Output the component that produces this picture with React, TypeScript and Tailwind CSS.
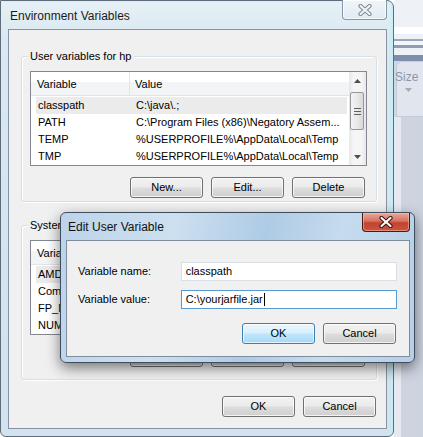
import React from "react";

const ui = "font-['Liberation_Sans',Arial,sans-serif] text-[11px] text-black";

const btnBase =
  "h-[21px] w-[73px] rounded-[3px] border flex items-center justify-center text-[11px] leading-none";
const btnNormal =
  "border-[#707070] bg-[linear-gradient(#f2f2f2_0%,#ebebeb_48%,#dddddd_52%,#cfcfcf_100%)] shadow-[inset_0_0_0_1px_rgba(255,255,255,0.75)]";
const btnFocus =
  "border-[#3c7fb1] bg-[linear-gradient(#eaf6fd_0%,#d9f0fc_48%,#bee6fd_52%,#a7d9f5_100%)] shadow-[inset_0_0_0_1px_rgba(255,255,255,0.7)]";

function Button({ label, focused }: { label: string; focused?: boolean }) {
  return <div className={`${btnBase} ${focused ? btnFocus : btnNormal}`}>{label}</div>;
}

function Arrow({ up }: { up?: boolean }) {
  return (
    <svg width="7" height="4" viewBox="0 0 7 4">
      <path d={up ? "M0 4 L3.5 0 L7 4 Z" : "M0 0 L3.5 4 L7 0 Z"} fill="#4d4d4d" />
    </svg>
  );
}

function Scrollbar() {
  return (
    <div className="w-[17px] flex flex-col bg-[linear-gradient(90deg,#e6e6e6,#f5f5f5_25%,#f5f5f5_75%,#e6e6e6)]">
      <div className="h-[17px] flex items-center justify-center">
        <Arrow up />
      </div>
      <div className="mt-[3px] ml-[1px] h-[38px] w-[14px] rounded-[2px] border border-[#979797] bg-[linear-gradient(90deg,#f4f4f4,#e9e9e9_50%,#d9d9d9)] flex flex-col items-center justify-center gap-[2px]">
        <div className="h-[1px] w-[7px] bg-[#5f5f5f]" />
        <div className="h-[1px] w-[7px] bg-[#5f5f5f]" />
        <div className="h-[1px] w-[7px] bg-[#5f5f5f]" />
      </div>
      <div className="flex-1" />
      <div className="h-[17px] flex items-center justify-center">
        <Arrow />
      </div>
    </div>
  );
}

type Row = [string, string];

function ListView({ rows, selected }: { rows: Row[]; selected: number }) {
  return (
    <div className="h-[95px] w-[337px] border border-[#828790] bg-white flex">
      <div className="flex-1 flex flex-col overflow-hidden">
        <div className="h-[24px] flex border-b border-[#e3e4e6] bg-[linear-gradient(#ffffff_0%,#ffffff_44%,#f3f4f6_44%,#f3f4f6_100%)]">
          <div className="w-[99px] pl-[6px] pt-[2px] flex items-center border-r border-[#e3e5e7]">Variable</div>
          <div className="pl-[5px] pt-[2px] flex items-center">Value</div>
        </div>
        <div className="pt-[1px] pl-[5px] flex flex-col">
          {rows.map(([name, value], i) => (
            <div
              key={name}
              className={`h-[17px] w-[311px] flex items-center whitespace-nowrap ${
                i === selected ? "bg-[#ebebeb]" : ""
              }`}
            >
              <div className="w-[100px] pl-[2px] overflow-hidden">{name}</div>
              <div className="flex-1 overflow-hidden">{value}</div>
            </div>
          ))}
        </div>
      </div>
      <Scrollbar />
    </div>
  );
}

function Group({ label, className, children }: { label: string; className: string; children: React.ReactNode }) {
  return (
    <div
      className={`relative rounded-[3px] border border-[#d5dfe5] shadow-[inset_1px_1px_0_#ffffff,1px_1px_0_#ffffff] ${className}`}
    >
      <span className="absolute left-[6px] -top-[8px] bg-[#f0f0f0] px-[2px] leading-[14px]">{label}</span>
      {children}
    </div>
  );
}

function CloseGlyph({ light }: { light?: boolean }) {
  return (
    <svg width="14" height="12" viewBox="0 0 14 12">
      <path
        d="M2.5 2 L11.5 10 M11.5 2 L2.5 10"
        stroke={light ? "#7d8794" : "#3b1010"}
        strokeWidth="4.2"
        strokeLinecap="round"
      />
      <path
        d="M2.5 2 L11.5 10 M11.5 2 L2.5 10"
        stroke={light ? "#f3f6f9" : "#ffffff"}
        strokeWidth="2.2"
        strokeLinecap="round"
      />
    </svg>
  );
}

const userRows: Row[] = [
  ["classpath", "C:\\java\\.;"],
  ["PATH", "C:\\Program Files (x86)\\Negatory Assem..."],
  ["TEMP", "%USERPROFILE%\\AppData\\Local\\Temp"],
  ["TMP", "%USERPROFILE%\\AppData\\Local\\Temp"],
];

const systemRows: Row[] = [
  ["AMDAPPSDKROOT", "C:\\Program Files (x86)\\AMD APP\\"],
  ["ComSpec", "C:\\Windows\\system32\\cmd.exe"],
  ["FP_NO_HOST_CHECK", "NO"],
  ["NUMBER_OF_PROCESSORS", "4"],
];

function MainWindow() {
  return (
    <div className="w-[394px] h-[437px] shrink-0 flex flex-col rounded-tr-[7px] rounded-b-[6px] border border-[#5f6c7b] pl-[7px] pr-[6px] pb-[7px] bg-[linear-gradient(180deg,#e6f0f6_0%,#d9e8f1_40px,#d2e3ee_100%)] shadow-[inset_-2px_0_2px_rgba(190,240,250,0.9)]">
      <div className="h-[28px] flex items-start justify-between">
        <div className="pl-[2px] pt-[7px] text-[12px] leading-[16px] text-[#1b1b1b]">Environment Variables</div>
        <div className="-mt-[1px] h-[20px] w-[45px] rounded-b-[4px] border border-t-0 border-[#8595a8] bg-[linear-gradient(#f1f5f9,#e2eaf2)] flex items-center justify-center shadow-[inset_0_0_0_1px_rgba(255,255,255,0.7)]">
          <CloseGlyph light />
        </div>
      </div>
      <div className="flex-1 border border-[#8793a2] bg-[#f0f0f0] flex flex-col pl-[12px] pt-[26px] pr-[9px]">
        <Group label="User variables for hp" className="h-[146px] w-[356px] pl-[8px] pt-[14px] pr-[11px]">
          <ListView rows={userRows} selected={0} />
          <div className="mt-[11px] flex justify-end gap-[8px]">
            <Button label="New..." />
            <Button label="Edit..." />
            <Button label="Delete" />
          </div>
        </Group>
        <Group label="System variables" className="mt-[23px] h-[155px] w-[356px] pl-[8px] pt-[14px] pr-[11px]">
          <ListView rows={systemRows} selected={0} />
          <div className="mt-[11px] flex justify-end gap-[8px]">
            <Button label="New..." />
            <Button label="Edit..." />
            <Button label="Delete" />
          </div>
        </Group>
        <div className="mt-[16px] flex justify-end gap-[8px] pr-[1px]">
          <Button label="OK" />
          <Button label="Cancel" />
        </div>
      </div>
    </div>
  );
}

function BackgroundStrip() {
  return (
    <div className="flex-1 flex flex-col bg-[#d1d8e4]">
      <div className="h-[27px] bg-[#eef2f7]" />
      <div className="h-[7px] bg-white" />
      <div className="h-[5px] bg-[#eef2f7]" />
      <div className="h-[2px] bg-[#9ba7bf]" />
      <div className="h-[4px] bg-[#f4f6f9]" />
      <div className="h-[3px] bg-[#8f9cb6]" />
      <div className="h-[7px] bg-[#eef1f6]" />
      <div className="h-[6px] bg-[#7f8eac]" />
      <div className="ml-[2px] h-[56px] rounded-tl-[6px] border-l border-t border-b border-[#c3ccd9] bg-[#e1e6ee] flex flex-col pt-[7px]">
        <span className="-ml-[2px] text-[12px] leading-[16px] text-[#8c96a8]">Size</span>
        <div className="ml-[8px] mt-[3px]">
          <svg width="7" height="4" viewBox="0 0 7 4">
            <path d="M0 0 L3.5 4 L7 0 Z" fill="#a3acbb" />
          </svg>
        </div>
      </div>
      <div className="flex-1 flex">
        <div className="w-[7px] bg-[#e6eaf0]" />
        <div className="flex-1 bg-[#cdd4e0]" />
      </div>
    </div>
  );
}

function EditDialog() {
  return (
    <div className="absolute left-[60px] top-[212px] w-[355px] h-[151px] flex flex-col rounded-[6px] border border-[#3e4d5e] pl-[5px] pr-[4px] pb-[5px] bg-[linear-gradient(100deg,#bcd3ea_0%,#cde0f0_30%,#aecbe5_55%,#c6dbee_75%,#b6cfe7_100%)] shadow-[0_5px_14px_rgba(0,0,0,0.5)]">
      <div className="h-[27px] flex items-start justify-between">
        <div className="pl-[2px] pt-[6px] text-[12px] leading-[16px] text-[#111]">Edit User Variable</div>
        <div className="h-[19px] w-[48px] rounded-b-[4px] border border-t-0 border-[#4a1a12] bg-[linear-gradient(#e9a99b_0%,#d8705f_45%,#c4432f_55%,#c9553f_100%)] flex items-center justify-center shadow-[inset_0_0_0_1px_rgba(255,200,190,0.5)]">
          <CloseGlyph />
        </div>
      </div>
      <div className="flex-1 border border-[#7f8c9b] bg-[#f0f0f0] flex flex-col pl-[11px] pr-[12px] pt-[21px]">
        <div className="flex items-center">
          <div className="w-[103px]">Variable name:</div>
          <div className="h-[19px] w-[217px] border border-[#dadfe6] bg-white pl-[4px] flex items-center">classpath</div>
        </div>
        <div className="mt-[9px] flex items-center">
          <div className="w-[103px]">Variable value:</div>
          <div className="h-[19px] w-[217px] border border-[#5a9ad3] bg-white pl-[4px] flex items-center">
            {"C:\\yourjarfile.jar"}
            <span className="ml-[1px] h-[13px] w-[1px] bg-black" />
          </div>
        </div>
        <div className="mt-[14px] flex justify-end gap-[8px] pr-[1px]">
          <Button label="OK" focused />
          <Button label="Cancel" />
        </div>
      </div>
    </div>
  );
}

export default function App() {
  return (
    <div className={`relative w-[423px] h-[437px] overflow-hidden flex ${ui}`}>
      <MainWindow />
      <BackgroundStrip />
      <EditDialog />
    </div>
  );
}
